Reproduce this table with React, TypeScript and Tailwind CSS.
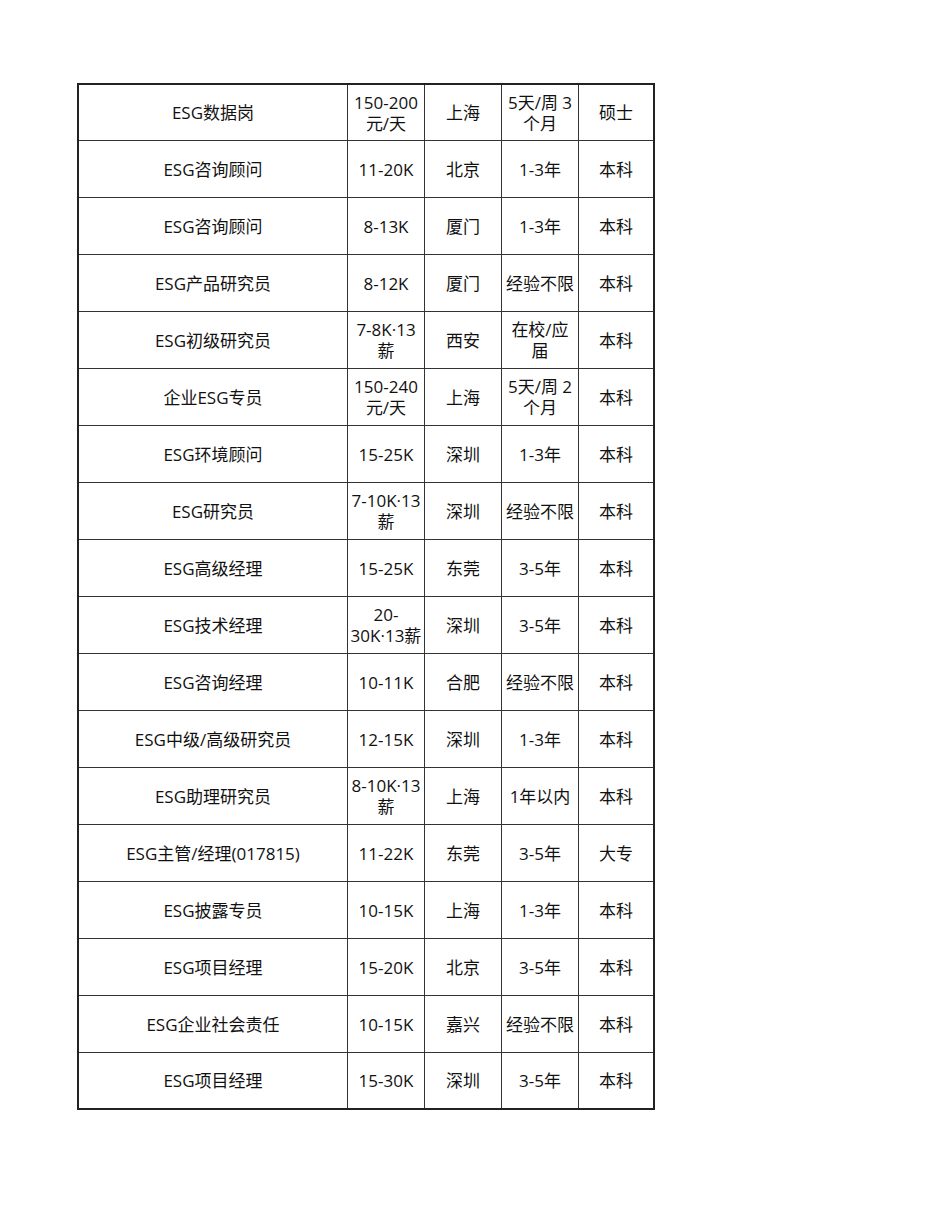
import React from "react";

type Row = [string, string[], string, string[], string];

const rows: Row[] = [
  ["ESG数据岗", ["150-200", "元/天"], "上海", ["5天/周 3", "个月"], "硕士"],
  ["ESG咨询顾问", ["11-20K"], "北京", ["1-3年"], "本科"],
  ["ESG咨询顾问", ["8-13K"], "厦门", ["1-3年"], "本科"],
  ["ESG产品研究员", ["8-12K"], "厦门", ["经验不限"], "本科"],
  ["ESG初级研究员", ["7-8K·13", "薪"], "西安", ["在校/应", "届"], "本科"],
  ["企业ESG专员", ["150-240", "元/天"], "上海", ["5天/周 2", "个月"], "本科"],
  ["ESG环境顾问", ["15-25K"], "深圳", ["1-3年"], "本科"],
  ["ESG研究员", ["7-10K·13", "薪"], "深圳", ["经验不限"], "本科"],
  ["ESG高级经理", ["15-25K"], "东莞", ["3-5年"], "本科"],
  ["ESG技术经理", ["20-", "30K·13薪"], "深圳", ["3-5年"], "本科"],
  ["ESG咨询经理", ["10-11K"], "合肥", ["经验不限"], "本科"],
  ["ESG中级/高级研究员", ["12-15K"], "深圳", ["1-3年"], "本科"],
  ["ESG助理研究员", ["8-10K·13", "薪"], "上海", ["1年以内"], "本科"],
  ["ESG主管/经理(017815)", ["11-22K"], "东莞", ["3-5年"], "大专"],
  ["ESG披露专员", ["10-15K"], "上海", ["1-3年"], "本科"],
  ["ESG项目经理", ["15-20K"], "北京", ["3-5年"], "本科"],
  ["ESG企业社会责任", ["10-15K"], "嘉兴", ["经验不限"], "本科"],
  ["ESG项目经理", ["15-30K"], "深圳", ["3-5年"], "本科"],
];

function Lines({ lines }: { lines: string[] }) {
  return (
    <div className="flex flex-col items-center leading-[21px]">
      {lines.map((l, i) => (
        <span key={i} className="whitespace-nowrap">
          {l}
        </span>
      ))}
    </div>
  );
}

export default function App() {
  return (
    <div
      className="min-h-[1230px] w-[950px] bg-white text-[17px] text-[#111]"
      style={{ fontFamily: '"Open Sans", "Noto Sans CJK SC", sans-serif' }}
    >
      <div className="pl-[77px] pt-[83px]">
        <div className="w-[578px] border-2 border-[#222]">
          {rows.map((r, i) => {
            const last = i === rows.length - 1;
            const h = i === 0 ? "h-[56px]" : last ? "h-[55px]" : "h-[57px]";
            const bb = last ? "" : "border-b border-[#333]";
            return (
              <div key={i} className={`grid grid-cols-[269px_77px_77px_77px_74px] ${h} ${bb}`}>
                <div className="flex items-center justify-center border-r border-[#333] leading-[21px]">
                  <span className="whitespace-nowrap">{r[0]}</span>
                </div>
                <div className="flex items-center justify-center border-r border-[#333]">
                  <Lines lines={r[1]} />
                </div>
                <div className="flex items-center justify-center border-r border-[#333] leading-[21px]">
                  <span className="whitespace-nowrap">{r[2]}</span>
                </div>
                <div className="flex items-center justify-center border-r border-[#333]">
                  <Lines lines={r[3]} />
                </div>
                <div className="flex items-center justify-center leading-[21px]">
                  <span className="whitespace-nowrap">{r[4]}</span>
                </div>
              </div>
            );
          })}
        </div>
      </div>
    </div>
  );
}
